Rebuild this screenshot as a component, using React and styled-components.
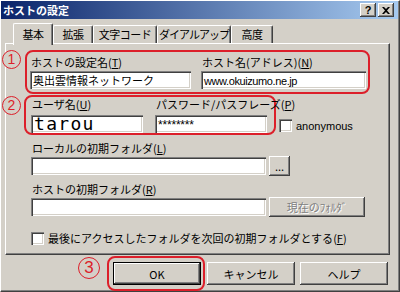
import React from 'react'
import styled, { createGlobalStyle } from 'styled-components'

const GlobalStyle = createGlobalStyle`
  html, body {
    margin: 0;
    padding: 0;
    background: #d4d0c8;
  }
  body {
    font-family: "Noto Sans CJK JP", "Noto Sans", sans-serif;
    font-size: 11px;
    color: #000;
  }
`

const RED = '#dc1f2a'

const Window = styled.div`
  width: 400px;
  height: 292px;
  box-sizing: border-box;
  background: #d4d0c8;
  border-top: 1px solid #ffffff;
  border-left: 1px solid #ffffff;
  border-right: 1px solid #404040;
  border-bottom: 1px solid #404040;
  box-shadow: inset -1px -1px #808080;
  display: flex;
  flex-direction: column;
  overflow: hidden;
`

const TitleBar = styled.div`
  height: 18px;
  margin: 0 1px 0 0;
  padding: 0 4px 0 2px;
  display: flex;
  align-items: center;
  justify-content: space-between;
  background: linear-gradient(to right, #0a246a, #a6caf0);
  color: #fff;
  font-weight: bold;
  font-size: 11px;
`

const TitleButtons = styled.div`
  display: flex;
  gap: 2px;
`

const TitleButton = styled.div`
  width: 16px;
  height: 14px;
  box-sizing: border-box;
  background: #d4d0c8;
  box-shadow: inset -1px -1px #404040, inset 1px 1px #ffffff,
    inset -2px -2px #808080, inset 2px 2px #d4d0c8;
  display: flex;
  align-items: center;
  justify-content: center;
  color: #000;
  font-family: "Liberation Sans", Arial, sans-serif;
  font-size: 11px;
  font-weight: bold;
  line-height: 1;
`

const TabRow = styled.div`
  height: 24px;
  padding-left: 12px;
  display: flex;
  align-items: flex-end;
  position: relative;
  z-index: 1;
`

const Tab = styled.div`
  box-sizing: border-box;
  width: ${p => p.$w}px;
  height: ${p => (p.$active ? 22 : 18)}px;
  margin: ${p => (p.$active ? '0 0 -2px 0' : '0')};
  padding-top: ${p => (p.$active ? 3 : 1)}px;
  background: #d4d0c8;
  border-top: 1px solid #ffffff;
  border-left: 1px solid #ffffff;
  border-right: 1px solid #404040;
  border-top-left-radius: 2px;
  border-top-right-radius: 2px;
  box-shadow: inset -1px 0 #808080;
  text-align: center;
  font-size: 11px;
  line-height: 14px;
  letter-spacing: ${p => p.$ls ?? -0.5}px;
  white-space: nowrap;
  overflow: hidden;
`

const Panel = styled.div`
  box-sizing: border-box;
  margin-left: 4px;
  width: 385px;
  height: 212px;
  border-top: 1px solid #ffffff;
  border-left: 1px solid #ffffff;
  border-right: 1px solid #404040;
  border-bottom: 1px solid #404040;
  box-shadow: inset -1px -1px #808080;
  padding-top: 6px;
  display: flex;
  flex-direction: column;
`

const RedBox = styled.div`
  position: relative;
  box-sizing: border-box;
  border: 2px solid ${RED};
  border-radius: 8px;
  display: flex;
  align-items: flex-start;
`

const Box1 = styled(RedBox)`
  margin-left: 19px;
  width: 345px;
  height: 44px;
  padding: 3px 0 0 3px;
  gap: 10px;
`

const Box2 = styled(RedBox)`
  width: 252px;
  height: 40px;
  padding: 0 0 0 5px;
  gap: 12px;
`

const Box3 = styled(RedBox)`
  height: 35px;
  padding: 4px 2px 0 4px;
`

const Circle = styled.div`
  position: absolute;
  left: ${p => p.$x}px;
  top: ${p => p.$y}px;
  width: ${p => p.$size}px;
  height: ${p => p.$size}px;
  box-sizing: border-box;
  border: 1.5px solid ${RED};
  border-radius: 50%;
  background: #d4d0c8;
  color: ${RED};
  font-family: "Liberation Sans", Arial, sans-serif;
  font-size: ${p => p.$size - 5}px;
  line-height: ${p => p.$size - 3}px;
  text-align: center;
`

const Row2 = styled.div`
  display: flex;
  align-items: flex-end;
  gap: 3px;
  margin: 1px 0 0 18px;
`

const Field = styled.div`
  display: flex;
  flex-direction: column;
  gap: ${p => p.$gap ?? 2}px;
`

const Label = styled.div`
  height: 14px;
  line-height: 14px;
  font-size: 11px;
  white-space: nowrap;
  padding-left: 1px;
`

const TextBox = styled.div`
  box-sizing: border-box;
  width: ${p => p.$w}px;
  height: 18px;
  background: #ffffff;
  box-shadow: inset 1px 1px #808080, inset 2px 2px #404040,
    inset -1px -1px #ffffff, inset -2px -2px #d4d0c8;
  padding: 2px 3px 0;
  font-size: 11px;
  line-height: 15px;
  white-space: nowrap;
  overflow: hidden;
`

const UrlText = styled.span`
  font-family: "Liberation Sans", Arial, sans-serif;
  font-size: 11px;
  letter-spacing: -0.4px;
`

const BigMono = styled(TextBox)`
  font-family: "DejaVu Sans Mono", "Liberation Mono", monospace;
  font-size: 18px;
  letter-spacing: 1.3px;
  line-height: 18px;
  padding: 0 3px;
  overflow: visible;
`

const Stars = styled(TextBox)`
  font-family: "Liberation Sans", Arial, sans-serif;
  font-size: 12px;
  letter-spacing: -0.2px;
  line-height: 16px;
`

const CheckWrap = styled.label`
  display: flex;
  align-items: center;
  gap: ${p => p.$gap}px;
  margin-bottom: ${p => p.$mb ?? 0}px;
  white-space: nowrap;
`

const CheckBox = styled.div`
  width: 13px;
  height: 13px;
  box-sizing: border-box;
  background: #ffffff;
  box-shadow: inset 1px 1px #808080, inset 2px 2px #404040,
    inset -1px -1px #ffffff, inset -2px -2px #d4d0c8;
  flex: none;
`

const EnglishLabel = styled.span`
  font-family: "Liberation Sans", Arial, sans-serif;
  font-size: 11px;
`

const FolderBlock = styled.div`
  margin: ${p => p.$mt}px 0 0 25px;
  display: flex;
  flex-direction: column;
  gap: 1px;
`

const InputLine = styled.div`
  display: flex;
  align-items: center;
  gap: 3px;
`

const Button = styled.div`
  box-sizing: border-box;
  width: ${p => p.$w}px;
  height: ${p => p.$h}px;
  background: #d4d0c8;
  border: ${p => (p.$default ? '1px solid #000' : 'none')};
  box-shadow: inset -1px -1px #404040, inset 1px 1px #ffffff,
    inset -2px -2px #808080, inset 2px 2px #d4d0c8;
  display: flex;
  align-items: center;
  justify-content: center;
  font-size: 11px;
  color: ${p => (p.$disabled ? '#808080' : '#000')};
  text-shadow: ${p => (p.$disabled ? '1px 1px #ffffff' : 'none')};
  flex: none;
`

const LastCheck = styled(CheckWrap)`
  margin: 13px 0 0 25px;
`

const ButtonRow = styled.div`
  margin: 1px 0 0 106px;
  display: flex;
  align-items: flex-start;
  gap: 2px;
`

const PlainButtons = styled.div`
  margin-top: 6px;
  display: flex;
  gap: 5px;
`

const Acc = ({ k }) => (
  <>
    (<u>{k}</u>)
  </>
)

const CloseIcon = () => (
  <svg width="8" height="7" viewBox="0 0 8 7">
    <path d="M0 0 L2 0 L4 2 L6 0 L8 0 L5 3.5 L8 7 L6 7 L4 5 L2 7 L0 7 L3 3.5 Z" fill="#000" />
  </svg>
)

const tabs = [
  { name: '基本', w: 40, active: true },
  { name: '拡張', w: 40 },
  { name: '文字コード', w: 64 },
  { name: 'ダイアルアップ', w: 74, ls: -1 },
  { name: '高度', w: 42 },
]

export default function App() {
  return (
    <>
      <GlobalStyle />
      <Window>
        <TitleBar>
          <span>ホストの設定</span>
          <TitleButtons>
            <TitleButton>?</TitleButton>
            <TitleButton><CloseIcon /></TitleButton>
          </TitleButtons>
        </TitleBar>

        <TabRow>
          {tabs.map(t => (
            <Tab key={t.name} $w={t.w} $active={t.active} $ls={t.ls}>{t.name}</Tab>
          ))}
        </TabRow>

        <Panel>
          <Box1>
            <Circle $x={-25} $y={-2} $size={19}>1</Circle>
            <Field>
              <Label>ホストの設定名<Acc k="T" /></Label>
              <TextBox $w={161}>奥出雲情報ネットワーク</TextBox>
            </Field>
            <Field>
              <Label>ホスト名(アドレス)<Acc k="N" /></Label>
              <TextBox $w={165}><UrlText>www.okuizumo.ne.jp</UrlText></TextBox>
            </Field>
          </Box1>

          <Row2>
            <Box2>
              <Circle $x={-24} $y={-1} $size={19}>2</Circle>
              <Field $gap={4}>
                <Label>ユーザ名<Acc k="U" /></Label>
                <BigMono $w={112}>tarou</BigMono>
              </Field>
              <Field $gap={4}>
                <Label>パスワード/パスフレーズ<Acc k="P" /></Label>
                <Stars $w={112}>********</Stars>
              </Field>
            </Box2>
            <CheckWrap $gap={4} $mb={3}>
              <CheckBox />
              <EnglishLabel>anonymous</EnglishLabel>
            </CheckWrap>
          </Row2>

          <FolderBlock $mt={6}>
            <Label>ローカルの初期フォルダ<Acc k="L" /></Label>
            <InputLine>
              <TextBox $w={235} />
              <Button $w={21} $h={20}>...</Button>
            </InputLine>
          </FolderBlock>

          <FolderBlock $mt={6}>
            <Label>ホストの初期フォルダ<Acc k="R" /></Label>
            <InputLine>
              <TextBox $w={235} />
              <Button $w={96} $h={20} $disabled>現在のﾌｫﾙﾀﾞ</Button>
            </InputLine>
          </FolderBlock>

          <LastCheck $gap={4}>
            <CheckBox />
            <span>最後にアクセスしたフォルダを次回の初期フォルダとする<Acc k="F" /></span>
          </LastCheck>
        </Panel>

        <ButtonRow>
          <Box3>
            <Circle $x={-31} $y={-1} $size={22}>3</Circle>
            <Button $w={88} $h={23} $default>OK</Button>
          </Box3>
          <PlainButtons>
            <Button $w={88} $h={23}>キャンセル</Button>
            <Button $w={88} $h={23}>ヘルプ</Button>
          </PlainButtons>
        </ButtonRow>
      </Window>
    </>
  )
}
